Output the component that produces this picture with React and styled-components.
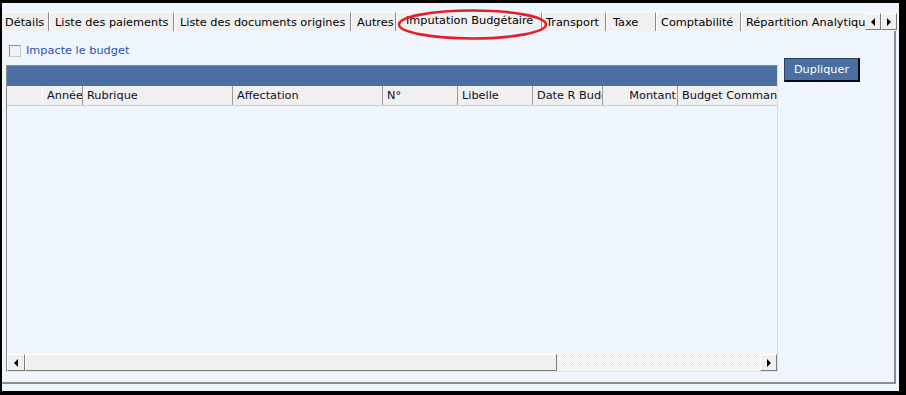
import React from 'react';
import styled, { createGlobalStyle } from 'styled-components';

const GlobalStyle = createGlobalStyle`
  html, body { margin: 0; padding: 0; background: #000; }
  body { width: 906px; height: 395px; overflow: hidden; font-family: "DejaVu Sans", Verdana, sans-serif; }
`;

const FS = '11.3px';

const Screen = styled.div`
  width: 906px;
  height: 395px;
  background: #000;
  padding: 3px 0 0 2px;
  box-sizing: border-box;
`;

const Frame = styled.div`
  position: relative;
  width: 897px;
  height: 388px;
  background: #eef5fd;
  display: flex;
  flex-direction: column;
`;

const TabBar = styled.div`
  display: flex;
  margin-top: 9px;
  height: 19px;
  width: 895px;
`;

const TabViewport = styled.div`
  flex: 1;
  display: flex;
  overflow: hidden;
  min-width: 0;
`;

const Tab = styled.div`
  flex-shrink: 0;
  box-sizing: border-box;
  width: ${p => (p.$w ? `${p.$w}px` : 'auto')};
  padding-left: ${p => p.$pl}px;
  padding-right: ${p => (p.$w ? 0 : 8)}px;
  height: 19px;
  line-height: ${p => (p.$active ? 16 : 19)}px;
  font-size: ${FS};
  color: #000;
  white-space: nowrap;
  overflow: hidden;
  background: #f0f0f0;
  border-top: 1px solid #fbfbfb;
  border-left: 1px solid ${p => (p.$first ? '#f0f0f0' : '#ffffff')};
  border-right: 1px solid #8a8a8a;
`;

const ArrowGroup = styled.div`
  display: flex;
  height: 17px;
  margin-top: 1px;
`;

const ArrowBtn = styled.div`
  width: 16px;
  height: 17px;
  box-sizing: border-box;
  background: #f0f0f0;
  border-top: 1px solid #ffffff;
  border-left: 1px solid #ffffff;
  border-right: 1px solid #7a7a7a;
  border-bottom: 1px solid #7a7a7a;
  display: flex;
  align-items: center;
  justify-content: center;
`;

const Triangle = styled.span`
  width: 0;
  height: 0;
  border-top: 4px solid transparent;
  border-bottom: 4px solid transparent;
  ${p => (p.$dir === 'left' ? 'border-right: 4px solid #000;' : 'border-left: 4px solid #000;')}
`;

const Panel = styled.div`
  width: 894px;
  height: 353px;
  box-sizing: border-box;
  border-right: 2px solid #8c8c8c;
  border-bottom: 2px solid #8c8c8c;
  padding-left: 4px;
  display: flex;
  flex-direction: column;
`;

const CheckRow = styled.label`
  display: flex;
  align-items: center;
  margin: 13px 0 0 3px;
  height: 13px;
`;

const Box = styled.span`
  width: 12px;
  height: 12px;
  box-sizing: border-box;
  border: 1px solid #8e8e8e;
  border-right-color: #c8c8c8;
  border-bottom-color: #c8c8c8;
  background: #f2f2f2;
`;

const CheckLabel = styled.span`
  margin-left: 5px;
  font-size: ${FS};
  color: #2f4fb5;
`;

const MainRow = styled.div`
  display: flex;
  margin-top: 1px;
  align-items: flex-start;
`;

const Grid = styled.div`
  margin-top: 7px;
  width: 772px;
  height: 307px;
  box-sizing: border-box;
  border-top: 1px solid #8a8a8a;
  border-left: 1px solid #8a8a8a;
  border-right: 1px solid #dcdcdc;
  border-bottom: 1px solid #e4e4e4;
  display: flex;
  flex-direction: column;
  overflow: hidden;
`;

const BlueBar = styled.div`
  height: 20px;
  background: #4a6fa0;
  flex-shrink: 0;
`;

const HeaderRow = styled.div`
  display: flex;
  height: 20px;
  box-sizing: border-box;
  border-bottom: 1px solid #cfcfcf;
  background: #f0f0f0;
  flex-shrink: 0;
`;

const HeadCell = styled.div`
  flex-shrink: 0;
  box-sizing: border-box;
  width: ${p => p.$w}px;
  padding: ${p => (p.$right ? '0 1px 0 0' : '0 0 0 4px')};
  text-align: ${p => (p.$right ? 'right' : 'left')};
  border-right: 1px solid ${p => (p.$light ? '#ffffff' : '#9a9a9a')};
  font-size: ${FS};
  line-height: 19px;
  color: #0e0e2a;
  white-space: nowrap;
  overflow: hidden;
`;

const Body = styled.div`
  flex: 1;
  background: #eef5fd;
`;

const HScroll = styled.div`
  display: flex;
  height: 17px;
  flex-shrink: 0;
  background: repeating-conic-gradient(#ffffff 0 25%, #e9e9e9 0 50%) 0 0 / 2px 2px;
`;

const ScrollBtn = styled.div`
  width: ${p => p.$w}px;
  flex-shrink: 0;
  box-sizing: border-box;
  background: #f0f0f0;
  border-top: 1px solid #ffffff;
  border-left: 1px solid #ffffff;
  border-right: 1px solid #7c7c7c;
  border-bottom: 1px solid #7c7c7c;
  display: flex;
  align-items: center;
  justify-content: center;
`;

const Track = styled.div`
  flex: 1;
`;

const Dupliquer = styled.button`
  margin-left: 6px;
  width: 76px;
  height: 24px;
  box-sizing: border-box;
  background: #4a6fa0;
  border-top: 1px solid #2a3f5c;
  border-left: 1px solid #2a3f5c;
  border-right: 2px solid #0a0a0a;
  border-bottom: 2px solid #0a0a0a;
  color: #fff;
  font-family: "DejaVu Sans", Verdana, sans-serif;
  font-size: ${FS};
  padding: 0 0 1px 0;
  cursor: pointer;
`;

const Highlight = styled.svg`
  position: absolute;
  left: 395px;
  top: 6px;
  width: 151px;
  height: 31px;
  pointer-events: none;
`;

const tabs = [
  { label: 'Détails', w: 47, pl: 2, first: true },
  { label: 'Liste des paiements', w: 125, pl: 5 },
  { label: 'Liste des documents origines', w: 177, pl: 5 },
  { label: 'Autres', w: 45, pl: 5 },
  { label: 'Imputation Budgétaire', w: 146, pl: 9, active: true },
  { label: 'Transport', w: 64, pl: 3 },
  { label: 'Taxe', w: 50, pl: 6 },
  { label: 'Comptabilité', w: 85, pl: 4 },
  { label: 'Répartition Analytique', pl: 4 },
];

const columns = [
  { label: '', w: 36, light: true },
  { label: 'Année', w: 40 },
  { label: 'Rubrique', w: 150 },
  { label: 'Affectation', w: 150 },
  { label: 'N°', w: 75 },
  { label: 'Libelle', w: 75 },
  { label: 'Date R Budget', w: 70 },
  { label: 'Montant', w: 75, right: true },
  { label: 'Budget Commandé', w: 150 },
];

export default function App() {
  return (
    <>
      <GlobalStyle />
      <Screen>
        <Frame>
          <TabBar>
            <TabViewport>
              {tabs.map(t => (
                <Tab key={t.label} $w={t.w} $pl={t.pl} $active={t.active} $first={t.first}>
                  {t.label}
                </Tab>
              ))}
            </TabViewport>
            <ArrowGroup>
              <ArrowBtn><Triangle $dir="left" /></ArrowBtn>
              <ArrowBtn><Triangle $dir="right" /></ArrowBtn>
            </ArrowGroup>
          </TabBar>
          <Panel>
            <CheckRow>
              <Box />
              <CheckLabel>Impacte le budget</CheckLabel>
            </CheckRow>
            <MainRow>
              <Grid>
                <BlueBar />
                <HeaderRow>
                  {columns.map((c, i) => (
                    <HeadCell key={i} $w={c.w} $right={c.right} $light={c.light}>
                      {c.label}
                    </HeadCell>
                  ))}
                </HeaderRow>
                <Body />
                <HScroll>
                  <ScrollBtn $w={18}><Triangle $dir="left" /></ScrollBtn>
                  <ScrollBtn $w={532} />
                  <Track />
                  <ScrollBtn $w={17}><Triangle $dir="right" /></ScrollBtn>
                </HScroll>
              </Grid>
              <Dupliquer>Dupliquer</Dupliquer>
            </MainRow>
          </Panel>
          <Highlight viewBox="0 0 151 31">
            <ellipse cx="75.5" cy="15.5" rx="73.5" ry="14" fill="none" stroke="#e3202a" strokeWidth="2.6" />
          </Highlight>
        </Frame>
      </Screen>
    </>
  );
}
